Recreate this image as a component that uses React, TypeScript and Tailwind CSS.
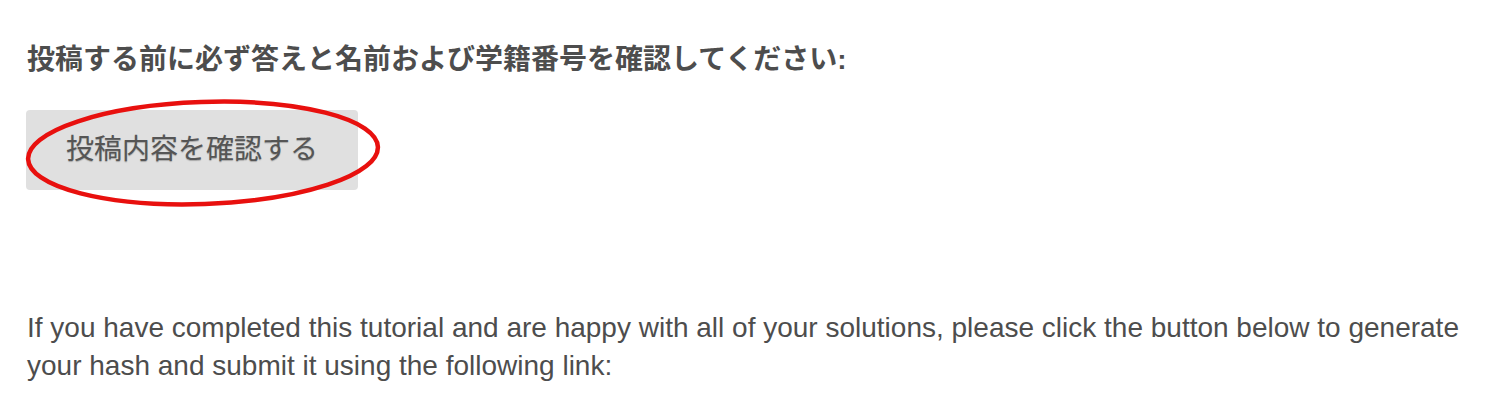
export default function App() {
  return (
    <div
      className="w-[1486px] h-[400px] bg-white px-[27px] pt-[40px] text-[#4d4d4d]"
      style={{ fontFamily: '"Liberation Sans", "Noto Sans CJK JP", sans-serif' }}
    >
      {/* Heading */}
      <p className="text-[28px] leading-[40px] font-bold">
        投稿する前に必ず答えと名前および学籍番号を確認してください:
      </p>

      {/* Check button with red circle */}
      <div className="relative mt-[30px] w-fit">
        <button className="h-[80px] w-[332px] rounded bg-[#e0e0e0] text-[28px] text-[#555] [text-shadow:0_1px_1px_rgba(0,0,0,0.25)] -ml-px">
          投稿内容を確認する
        </button>
        <svg
          className="absolute left-[-2px] top-[-12px] pointer-events-none"
          width="360"
          height="110"
          viewBox="0 0 360 110"
        >
          <ellipse
            cx="178"
            cy="55"
            rx="175"
            ry="51"
            fill="none"
            stroke="#e8100e"
            strokeWidth="4.5"
            transform="rotate(-2 178 55)"
          />
        </svg>
      </div>

      {/* Instructions */}
      <p className="mt-[119px] text-[28px] leading-[38px] max-w-[1440px]">
        If you have completed this tutorial and are happy with all of your solutions, please click the button below to generate your hash and submit it using the following link:
      </p>
    </div>
  );
}
